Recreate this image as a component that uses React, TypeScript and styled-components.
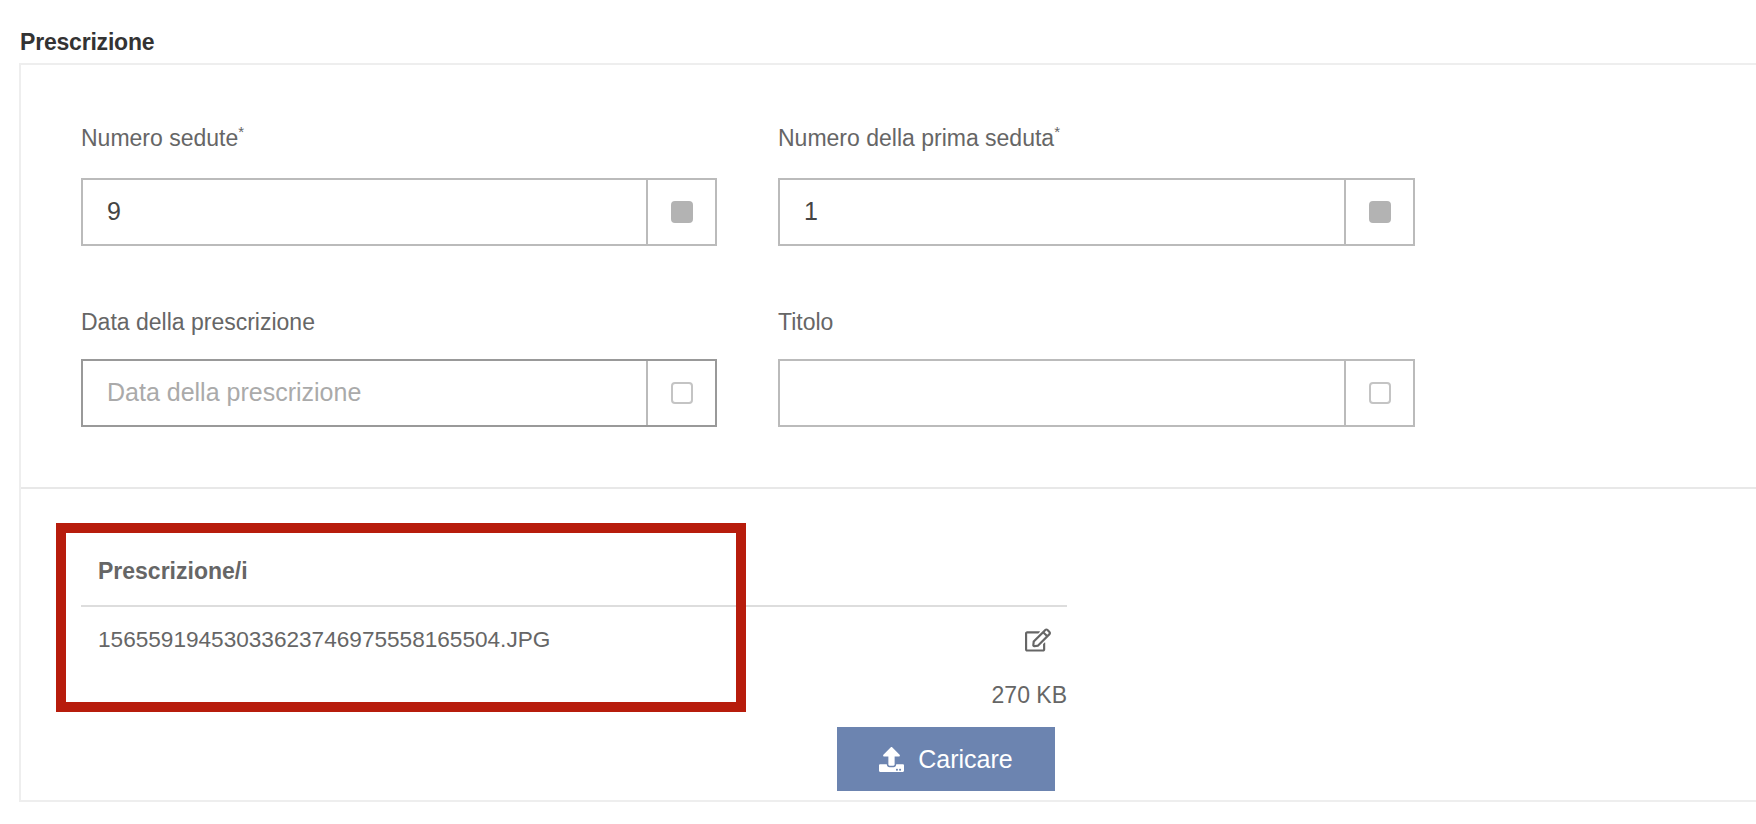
import React from "react";
import styled, { createGlobalStyle } from "styled-components";
import { FaRegEdit, FaUpload } from "react-icons/fa";

const GlobalStyle = createGlobalStyle`
  html, body {
    margin: 0;
    padding: 0;
    background: #fff;
    overflow: hidden;
    font-family: "Liberation Sans", Arial, sans-serif;
  }
`;

type FieldData = {
  label: string;
  required?: boolean;
  value?: string;
  placeholder?: string;
  checked?: boolean;
  strong?: boolean;
};

const fields: FieldData[] = [
  { label: "Numero sedute", required: true, value: "9", checked: true },
  { label: "Numero della prima seduta", required: true, value: "1", checked: true },
  { label: "Data della prescrizione", placeholder: "Data della prescrizione", strong: true },
  { label: "Titolo" },
];

export default function App() {
  return (
    <Page>
      <GlobalStyle />
      <Title>Prescrizione</Title>
      <Panel>
        <FormGrid>
          {fields.map((f) => (
            <Field key={f.label}>
              <Label required={f.required}>
                {f.label}
                {f.required && <Star>*</Star>}
              </Label>
              <InputGroup strong={f.strong}>
                <ValueBox muted={!f.value}>{f.value ?? f.placeholder}</ValueBox>
                <Addon>
                  <Check checked={f.checked} />
                </Addon>
              </InputGroup>
            </Field>
          ))}
        </FormGrid>
        <Files>
          <FileTable>
            <Highlight />
            <TableHead>Prescrizione/i</TableHead>
            <FileRow>
              <FileName>15655919453033623746975558165504.JPG</FileName>
              <EditIcon>
                <FaRegEdit />
              </EditIcon>
            </FileRow>
            <FileSize>270 KB</FileSize>
            <Actions>
              <UploadButton type="button">
                <FaUpload />
                Caricare
              </UploadButton>
            </Actions>
          </FileTable>
        </Files>
      </Panel>
    </Page>
  );
}

const Page = styled.div`
  width: 1756px;
  height: 824px;
  overflow: hidden;
`;

const Title = styled.h2`
  margin: 0;
  padding: 28px 0 0 20px;
  height: 35px;
  font-size: 23px;
  line-height: 28px;
  font-weight: 700;
  color: #333;
  letter-spacing: -0.2px;
`;

const Panel = styled.section`
  margin-left: 19px;
  width: 1760px;
  height: 739px;
  box-sizing: border-box;
  border: 2px solid #eee;
  border-right: 0;
`;

const FormGrid = styled.div`
  display: grid;
  grid-template-columns: 636px 637px;
  column-gap: 61px;
  row-gap: 60px;
  padding: 57px 0 60px 60px;
  border-bottom: 2px solid #e8e8e8;
`;

const Field = styled.div`
  display: flex;
  flex-direction: column;
`;

const Label = styled.label<{ required?: boolean }>`
  position: relative;
  font-size: 23px;
  line-height: 32px;
  color: #666;
  margin-bottom: ${(p) => (p.required ? "24px" : "21px")};
`;

const Star = styled.sup`
  font-size: 15px;
  line-height: 0;
  vertical-align: 9px;
`;

const InputGroup = styled.div<{ strong?: boolean }>`
  display: flex;
  height: 68px;
  box-sizing: border-box;
  border: 2px solid ${(p) => (p.strong ? "#999" : "#bbb")};
`;

const ValueBox = styled.div<{ muted: boolean }>`
  flex: 1;
  padding-left: 24px;
  font-size: 25px;
  line-height: 62px;
  color: ${(p) => (p.muted ? "#aaa" : "#444")};
`;

const Addon = styled.div`
  width: 67px;
  flex-shrink: 0;
  display: flex;
  align-items: center;
  justify-content: center;
  border-left: 2px solid #bbb;
`;

const Check = styled.span<{ checked?: boolean }>`
  width: 22px;
  height: 22px;
  box-sizing: border-box;
  border-radius: 4px;
  border: 2px solid ${(p) => (p.checked ? "#b3b3b3" : "#c4c4c4")};
  background: ${(p) => (p.checked ? "#b3b3b3" : "#fff")};
`;

const Files = styled.div`
  padding: 34px 0 0 60px;
`;

const FileTable = styled.div`
  position: relative;
  width: 986px;
`;

const Highlight = styled.div`
  position: absolute;
  left: -25px;
  top: 0;
  width: 690px;
  height: 189px;
  box-sizing: border-box;
  border: 10px solid #b71c0c;
  pointer-events: none;
`;

const TableHead = styled.div`
  height: 84px;
  padding: 0 0 0 17px;
  box-sizing: border-box;
  font-size: 23px;
  font-weight: 700;
  line-height: 96px;
  color: #666;
  border-bottom: 2px solid #ddd;
`;

const FileRow = styled.div`
  display: flex;
  align-items: center;
  justify-content: space-between;
  height: 66px;
  padding: 0 16px 0 17px;
`;

const FileName = styled.span`
  font-size: 22.6px;
  color: #666;
`;

const EditIcon = styled.span`
  display: inline-flex;
  font-size: 26px;
  color: #666;
`;

const FileSize = styled.div`
  text-align: right;
  font-size: 23px;
  line-height: 44px;
  color: #666;
`;

const Actions = styled.div`
  display: flex;
  justify-content: flex-end;
  padding: 10px 12px 0 0;
`;

const UploadButton = styled.button`
  width: 218px;
  height: 64px;
  display: flex;
  align-items: center;
  justify-content: center;
  gap: 14px;
  border: 0;
  background: #6c84b0;
  color: #fff;
  font-family: inherit;
  font-size: 25px;
  svg {
    width: 25px;
    height: 25px;
  }
`;
